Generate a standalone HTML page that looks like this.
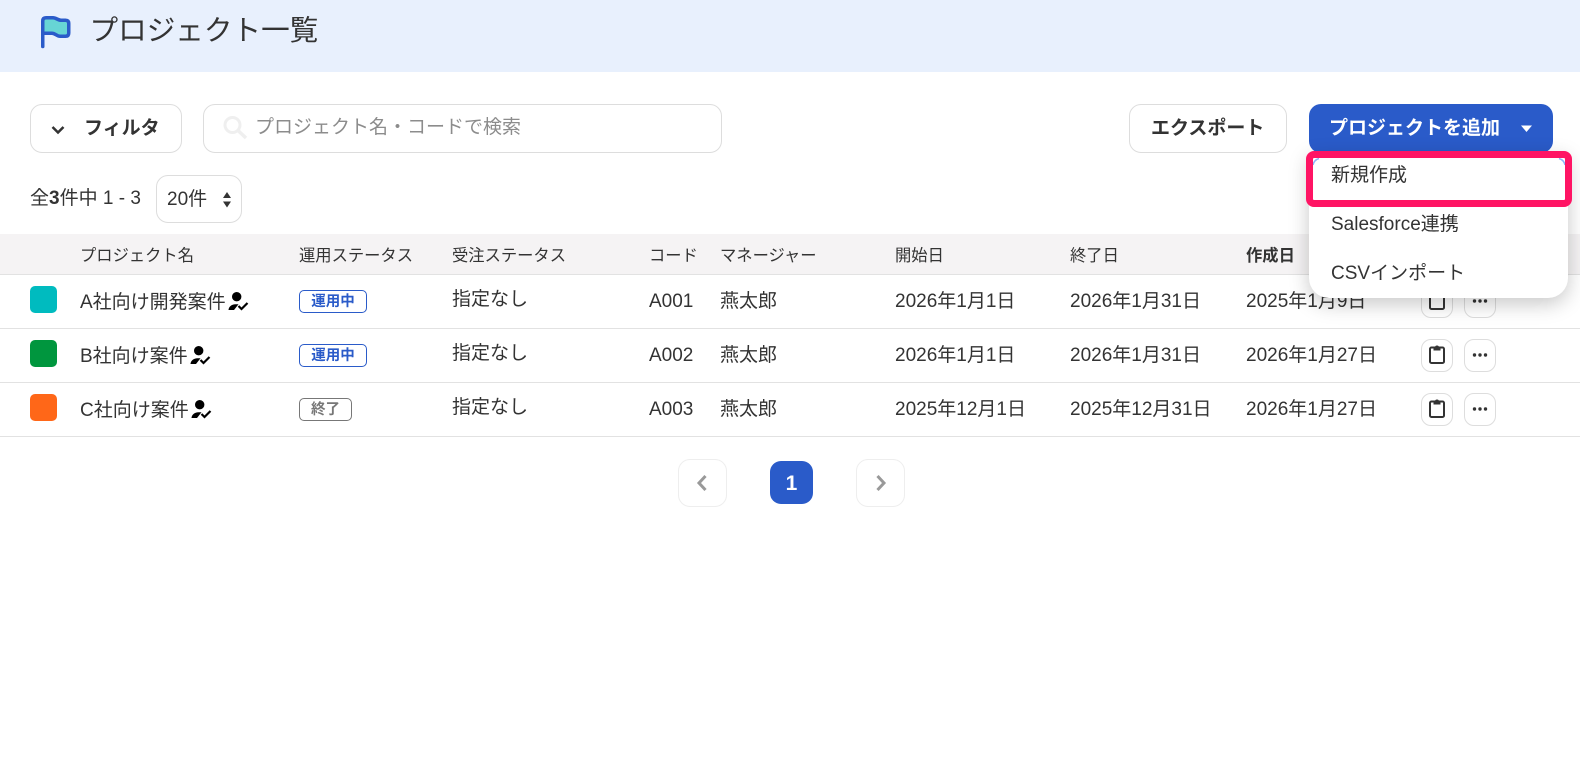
<!DOCTYPE html>
<html lang="ja"><head><meta charset="utf-8"><title>プロジェクト一覧</title>
<style>
html,body{margin:0;padding:0;background:#fff;width:1580px;height:766px;overflow:hidden}
body{position:relative;font-family:"Liberation Sans","Noto Sans CJK JP",sans-serif;color:#333}
.a,.t{position:absolute;box-sizing:border-box}
.t{white-space:nowrap;line-height:24px;height:24px}
.btn{border:1px solid #ddd;border-radius:12px;background:#fff}
.h{font-size:16.3px;top:243.500px}
.c{font-size:19px}
.line{left:0;width:1580px;height:1px;background:#e2e2e2}
.sq{left:30px;width:27px;height:27px;border-radius:5px}
.bdg{left:299px;height:23px;border:1px solid #2a5bc9;border-radius:5px;color:#2a5bc9;font-size:14.500px;font-weight:700;line-height:23px;text-align:center;background:#fff}
.ab{width:32px;height:33px;border:1px solid #ddd;border-radius:10px;background:#fff}
svg{position:absolute;display:block}
</style></head><body>
<div class="a" style="left:0;top:0;width:1580px;height:72px;background:#e8f0fd"></div>
<svg style="left:37.500px;top:13px" width="36" height="38" viewBox="0 0 36 38"><path d="M4.750 22V8q0-3.250 3.250-3.250h7c3 0 5 2.500 8 2.500h4.500q3.250 0 3.250 3.250v9.500q0 3.250-3.250 3.250h-5.500c-3 0-5-3-8-3H4.750z" fill="#67d5d5"/><path d="M4.750 33.500V8q0-3.250 3.250-3.250h7c3 0 5 2.500 8 2.500h4.500q3.250 0 3.250 3.250v9.500q0 3.250-3.250 3.250h-5.500c-3 0-5-3-8-3H4.750" fill="none" stroke="#2a5bc9" stroke-width="3.500" stroke-linecap="round" stroke-linejoin="round"/></svg>
<div class="t" style="left:89.500px;top:10.500px;height:40px;line-height:40px;font-size:28.600px">プロジェクト一覧</div>

<div class="a btn" style="left:30px;top:104px;width:152px;height:49px"></div>
<svg style="left:51px;top:125px" width="14" height="10" viewBox="0 0 14 10"><path d="M1.500 2l5.500 5.500L12.500 2" fill="none" stroke="#333" stroke-width="2.500"/></svg>
<div class="t" style="left:84px;top:117px;font-size:19px;font-weight:700">フィルタ</div>

<div class="a btn" style="left:203px;top:104px;width:519px;height:49px"></div>
<svg style="left:222.500px;top:115px" width="26" height="26" viewBox="0 0 26 26"><circle cx="9.500" cy="10" r="7.500" fill="none" stroke="#efefef" stroke-width="3"/><path d="M15 15.500l8 7.500" stroke="#efefef" stroke-width="3.500"/></svg>
<div class="t" style="left:255px;top:116px;font-size:19px;color:#8c8c8c">プロジェクト名・コードで検索</div>

<div class="a btn" style="left:1129px;top:104px;width:158px;height:49px"></div>
<div class="t" style="left:1151px;top:117px;font-size:19px;font-weight:700">エクスポート</div>

<div class="a" style="left:1309px;top:104px;width:244px;height:49px;background:#2a5bc9;border-radius:12px"></div>
<div class="t" style="left:1329px;top:117px;font-size:19px;font-weight:700;color:#fff">プロジェクトを追加</div>
<svg style="left:1520px;top:125px" width="13" height="8" viewBox="0 0 13 8"><path d="M1 .500h11L6.500 7z" fill="#fff"/></svg>

<div class="t" style="left:30px;top:187px;font-size:19px">全<b>3</b>件中 1 - 3</div>
<div class="a btn" style="left:156px;top:175px;width:86px;height:48px"></div>
<div class="t" style="left:167px;top:188px;font-size:19px">20件</div>
<svg style="left:222px;top:191px" width="10" height="18" viewBox="0 0 10 18"><path d="M5 1l4 6H1zM5 16.500l4-6H1z" fill="#333"/></svg>

<div class="a" style="left:0;top:234px;width:1580px;height:40px;background:#f5f3f4"></div>
<div class="a line" style="top:274px"></div>
<div class="a line" style="top:328px"></div>
<div class="a line" style="top:382px"></div>
<div class="a line" style="top:436px"></div>

<div class="t h" style="left:80px">プロジェクト名</div>
<div class="t h" style="left:299px">運用ステータス</div>
<div class="t h" style="left:452px">受注ステータス</div>
<div class="t h" style="left:649px">コード</div>
<div class="t h" style="left:720px">マネージャー</div>
<div class="t h" style="left:895px">開始日</div>
<div class="t h" style="left:1070px">終了日</div>
<div class="t h" style="left:1246px;font-weight:700">作成日</div>

<div class="a sq" style="top:286px;background:#00bbbf"></div>
<div class="t c" style="left:80px;top:291px">A社向け開発案件</div>
<svg style="left:228px;top:290px" width="22" height="22" viewBox="0 0 22 22"><circle cx="8.700" cy="6.700" r="4.700"/><path d="M.5 20c0-3 3-5.800 7-5.800h3l-4.500 5.800z"/><path d="M10.500 16l3 3 6-6" fill="none" stroke="#000" stroke-width="2.200"/></svg>
<div class="a bdg" style="top:290px;width:68px">運用中</div>
<div class="t c" style="left:452px;top:288px">指定なし</div>
<div class="t c" style="left:649px;top:290px">A001</div>
<div class="t c" style="left:720px;top:290px">燕太郎</div>
<div class="t c" style="left:895px;top:289.500px">2026年1月1日</div>
<div class="t c" style="left:1070px;top:289.500px">2026年1月31日</div>
<div class="t c" style="left:1246px;top:289.500px">2025年1月9日</div>

<div class="a sq" style="top:340px;background:#00963e"></div>
<div class="t c" style="left:80px;top:345px">B社向け案件</div>
<svg style="left:190px;top:344px" width="22" height="22" viewBox="0 0 22 22"><circle cx="8.700" cy="6.700" r="4.700"/><path d="M.5 20c0-3 3-5.800 7-5.800h3l-4.500 5.800z"/><path d="M10.500 16l3 3 6-6" fill="none" stroke="#000" stroke-width="2.200"/></svg>
<div class="a bdg" style="top:344px;width:68px">運用中</div>
<div class="t c" style="left:452px;top:342px">指定なし</div>
<div class="t c" style="left:649px;top:344px">A002</div>
<div class="t c" style="left:720px;top:344px">燕太郎</div>
<div class="t c" style="left:895px;top:343.500px">2026年1月1日</div>
<div class="t c" style="left:1070px;top:343.500px">2026年1月31日</div>
<div class="t c" style="left:1246px;top:343.500px">2026年1月27日</div>

<div class="a sq" style="top:394px;background:#ff6718"></div>
<div class="t c" style="left:80px;top:399px">C社向け案件</div>
<svg style="left:191px;top:398px" width="22" height="22" viewBox="0 0 22 22"><circle cx="8.700" cy="6.700" r="4.700"/><path d="M.5 20c0-3 3-5.800 7-5.800h3l-4.500 5.800z"/><path d="M10.500 16l3 3 6-6" fill="none" stroke="#000" stroke-width="2.200"/></svg>
<div class="a bdg" style="top:398px;width:53px;border-color:#777;color:#777">終了</div>
<div class="t c" style="left:452px;top:396px">指定なし</div>
<div class="t c" style="left:649px;top:398px">A003</div>
<div class="t c" style="left:720px;top:398px">燕太郎</div>
<div class="t c" style="left:895px;top:397.500px">2025年12月1日</div>
<div class="t c" style="left:1070px;top:397.500px">2025年12月31日</div>
<div class="t c" style="left:1246px;top:397.500px">2026年1月27日</div>

<div class="a ab" style="left:1421px;top:285px"></div><div class="a ab" style="left:1464px;top:285px"></div>
<svg style="left:1429px;top:290px" width="16" height="22" viewBox="0 0 16 22"><rect x="1" y="3.500" width="14" height="15.500" rx="1.500" fill="none" stroke="#333" stroke-width="2"/><path d="M4.500 6.500v-3H6a2 2 0 014 0h1.500v3z" fill="#333"/></svg>
<svg style="left:1472px;top:298px" width="16" height="6" viewBox="0 0 16 6" fill="#333"><circle cx="2.500" cy="3" r="1.700"/><circle cx="8" cy="3" r="1.700"/><circle cx="13.500" cy="3" r="1.700"/></svg>

<div class="a ab" style="left:1421px;top:339px"></div><div class="a ab" style="left:1464px;top:339px"></div>
<svg style="left:1429px;top:344px" width="16" height="22" viewBox="0 0 16 22"><rect x="1" y="3.500" width="14" height="15.500" rx="1.500" fill="none" stroke="#333" stroke-width="2"/><path d="M4.500 6.500v-3H6a2 2 0 014 0h1.500v3z" fill="#333"/></svg>
<svg style="left:1472px;top:352px" width="16" height="6" viewBox="0 0 16 6" fill="#333"><circle cx="2.500" cy="3" r="1.700"/><circle cx="8" cy="3" r="1.700"/><circle cx="13.500" cy="3" r="1.700"/></svg>

<div class="a ab" style="left:1421px;top:393px"></div><div class="a ab" style="left:1464px;top:393px"></div>
<svg style="left:1429px;top:398px" width="16" height="22" viewBox="0 0 16 22"><rect x="1" y="3.500" width="14" height="15.500" rx="1.500" fill="none" stroke="#333" stroke-width="2"/><path d="M4.500 6.500v-3H6a2 2 0 014 0h1.500v3z" fill="#333"/></svg>
<svg style="left:1472px;top:406px" width="16" height="6" viewBox="0 0 16 6" fill="#333"><circle cx="2.500" cy="3" r="1.700"/><circle cx="8" cy="3" r="1.700"/><circle cx="13.500" cy="3" r="1.700"/></svg>

<div class="a btn" style="left:678px;top:459px;width:49px;height:48px;border-color:#eee"></div>
<svg style="left:695px;top:473px" width="14" height="20" viewBox="0 0 14 20"><path d="M10.500 3L4 10l6.500 7" fill="none" stroke="#999" stroke-width="3"/></svg>
<div class="a" style="left:770px;top:461px;width:43px;height:43px;border-radius:11px;background:#2a5bc9;color:#fff;font-size:21px;font-weight:700;line-height:45px;text-align:center">1</div>
<div class="a btn" style="left:856px;top:459px;width:49px;height:48px;border-color:#eee"></div>
<svg style="left:874px;top:473px" width="14" height="20" viewBox="0 0 14 20"><path d="M3.500 3L10 10l-6.500 7" fill="none" stroke="#999" stroke-width="3"/></svg>

<div class="a" style="left:1309px;top:152px;width:259px;height:146px;background:#fff;border-radius:0 0 20px 20px;box-shadow:0 6px 20px rgba(0,0,0,.22)"></div>
<div class="t" style="left:1331px;top:164px;font-size:19px">新規作成</div>
<div class="t" style="left:1331px;top:213px;font-size:19px">Salesforce連携</div>
<div class="t" style="left:1331px;top:262px;font-size:19px">CSVインポート</div>
<svg style="left:1306px;top:151px" width="266" height="25" viewBox="0 0 266 25" fill="none" stroke="#8ab4f8" stroke-width="1.500"><path d="M7 14Q8 9 13 7.500M259 14Q258 9 253 7.500"/></svg>
<div class="a" style="left:1306px;top:151px;width:266px;height:56px;border:7px solid #ff1464;border-radius:8px"></div>
</body></html>
